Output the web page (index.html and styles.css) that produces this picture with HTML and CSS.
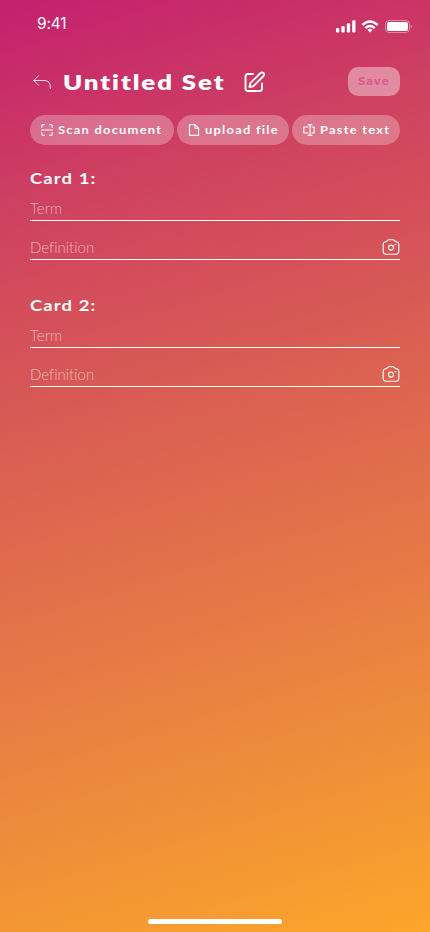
FILE: index.html
```html
<!DOCTYPE html>
<html lang="en">
<head>
<meta charset="utf-8">
<title>Untitled Set</title>
<link rel="stylesheet" href="styles.css">
</head>
<body>
<div class="screen">
  <div class="status">
    <span class="time">9:41</span>
    <svg width="76" height="14" viewBox="0 0 76 14">
      <g fill="#fff"><rect x="0" y="8" width="3.3" height="4.5" rx="1"/><rect x="5.4" y="6" width="3.3" height="6.5" rx="1"/><rect x="10.8" y="3.3" width="3.3" height="9.2" rx="1"/><rect x="16.2" y="0.3" width="3.3" height="12.2" rx="1"/></g>
      <g fill="none" stroke="#fff" stroke-width="2.4"><path d="M26.4 5 Q34 -2 41.6 5"/><path d="M29.3 8.1 Q34 3.9 38.7 8.1"/></g>
      <path d="M31.3 9.8 Q34 7.8 36.7 9.8 L34 12.5Z" fill="#fff"/>
      <rect x="49.5" y=".5" width="24" height="12" rx="3.5" fill="none" stroke="#fff" stroke-opacity=".4"/>
      <rect x="51" y="2" width="21" height="9" rx="2" fill="#fff"/>
      <path d="M74.7 4.4 Q77 6.4 74.7 8.4Z" fill="#fff" fill-opacity=".5"/>
    </svg>
  </div>
  <header class="header">
    <svg class="back" width="18" height="15" viewBox="0 0 18 15" fill="none" stroke="#fff" stroke-opacity=".85" stroke-linecap="round" stroke-linejoin="round"><path d="M5.6 .7 .8 5.5l4.8 4.8M.8 5.5H11Q17.3 5.5 17.3 12v1.6"/></svg>
    <h1 class="title"><span class="wide">Untitled Set</span></h1>
    <svg class="edit" width="22" height="22" viewBox="0 0 22 22" fill="none" stroke="#fff" stroke-width="1.9" stroke-linecap="round" stroke-linejoin="round"><path d="M9 3H4Q1.500 3 1.500 5.500V17.500Q1.500 20 4 20H15.500Q18 20 18 17.500V12.500"/><path d="M5.500 16 6.300 12.200 16.500 2Q18 .8 19.500 2T19.500 5L9.400 15.200Z"/></svg>
    <button class="save"><span class="wide">Save</span></button>
  </header>
  <div class="actions">
    <button class="pill scan"><svg width="12" height="12" viewBox="0 0 12 12" fill="none" stroke="#fff" stroke-width="1.1"><path d="M.8 4V1.500Q.8.8 1.500.8H4M8 .8h2.500q.7 0 .7.7V4M.8 8v2.500q0 .7.7.7H4M8 11.200h2.500q.7 0 .7-.7V8M0 6h12"/></svg><span class="wide">Scan document</span></button>
    <button class="pill upload"><svg width="12" height="12" viewBox="0 0 12 12" fill="none" stroke="#fff" stroke-width="1.1" stroke-linejoin="round"><path d="M1.500.6H7L10.600 4.200V11.400H1.500ZM7 .6V4.200H10.600"/></svg><span class="wide">upload file</span></button>
    <button class="pill paste"><svg width="12" height="12" viewBox="0 0 12 12" fill="none" stroke="#fff" stroke-width="1.1"><path d="M5.500 3H.8V9H5.500M8.500 3h2.700v6H8.500M4.700.6H9.300M7 .6V11.400M4.700 11.400H9.300"/></svg><span class="wide">Paste text</span></button>
  </div>
  <section class="card">
    <h2 class="name"><span class="wide">Card 1:</span></h2>
    <div class="field"><span class="hint">Term</span></div>
    <div class="field definition"><span class="hint">Definition</span>
      <svg width="18" height="16" viewBox="0 0 18 16" fill="none" stroke="#fff" stroke-width="1.15" stroke-linejoin="round"><path d="M3.200 2.800Q4.800 2.800 5.500 1.500Q6 .7 7 .7H11Q12 .7 12.500 1.500Q13.200 2.800 14.800 2.800Q16.800 3.200 16.800 5.500V12.500Q16.600 15.200 13.900 15.200H4.100Q1.400 15.200 1.200 12.500V5.500Q1.200 3.200 3.200 2.800Z"/><circle cx="9" cy="8.600" r="2.500"/><path d="M12.600 5.700h1.600"/></svg>
    </div>
  </section>
  <section class="card">
    <h2 class="name"><span class="wide">Card 2:</span></h2>
    <div class="field"><span class="hint">Term</span></div>
    <div class="field definition"><span class="hint">Definition</span>
      <svg width="18" height="16" viewBox="0 0 18 16" fill="none" stroke="#fff" stroke-width="1.15" stroke-linejoin="round"><path d="M3.200 2.800Q4.800 2.800 5.500 1.500Q6 .7 7 .7H11Q12 .7 12.500 1.500Q13.200 2.800 14.800 2.800Q16.800 3.200 16.800 5.500V12.500Q16.600 15.200 13.900 15.200H4.100Q1.400 15.200 1.200 12.500V5.500Q1.200 3.200 3.200 2.800Z"/><circle cx="9" cy="8.600" r="2.500"/><path d="M12.600 5.700h1.600"/></svg>
    </div>
  </section>
  <div class="home"></div>
</div>
</body>
</html>
```
FILE: styles.css
```css
* { box-sizing: border-box; }
body { margin: 0; }
.screen {
  width: 430px; height: 932px; padding: 0 30px 8px; overflow: hidden;
  display: flex; flex-direction: column;
  background: linear-gradient(163deg, #c4206f 0%, #cf4260 21%, #e67b45 66%, #fba62a 100%);
  color: #fff; font-family: Lato, "Liberation Sans", sans-serif;
  font-variant-ligatures: none;
}
.status { height: 67px; flex: none; display: flex; justify-content: space-between; padding: 14px 0 0 7px; margin-right: -12px; }
.status svg { margin-top: 6px; }
.time { font: 400 15.500px/19px Inter, sans-serif; letter-spacing: -.2px; }
.wide { display: inline-block; transform: scaleX(1.230); transform-origin: left center; white-space: nowrap; }
.header { height: 29px; flex: none; display: flex; align-items: center; }
.back { margin: 1px 0 0 3px; }
.title { margin: 0 0 0 12px; width: 181px; font-size: 21px; line-height: 29px; font-weight: 800; letter-spacing: 1.550px; }
.edit { margin-top: 1px; }
.save { margin-left: auto; width: 52px; height: 29px; border: 0; border-radius: 10px; background: rgba(255,255,255,.4); color: #db5b90; font: 800 10.500px/29px Lato, sans-serif; letter-spacing: .9px; padding: 0 0 0 10px; text-align: left; }
.actions { display: flex; gap: 3px; margin-top: 19px; height: 30px; flex: none; }
.pill { border: 0; border-radius: 15px; height: 30px; background: rgba(255,255,255,.28); color: #fff; display: flex; align-items: center; gap: 5px; padding: 0 0 0 11px; font: 700 10.500px/30px Lato, sans-serif; letter-spacing: 1px; font-variant-ligatures: none; }
.scan { width: 144px; }
.upload { width: 112px; }
.paste { width: 108px; }
.card { margin-top: 22px; height: 105px; flex: none; }
.name { margin: 0; font-size: 15px; line-height: 22px; font-weight: 700; letter-spacing: .9px; }
.field { height: 32px; border-bottom: 1px solid #fff; display: flex; align-items: center; justify-content: space-between; padding-top: 6px; }
.definition { height: 39px; padding-top: 13px; }
.hint { color: rgba(255,255,255,.58); font-size: 15px; line-height: 18px; font-weight: 300; }
.home { margin: auto auto 0; width: 134px; height: 5px; border-radius: 3px; background: #fff; }
```
